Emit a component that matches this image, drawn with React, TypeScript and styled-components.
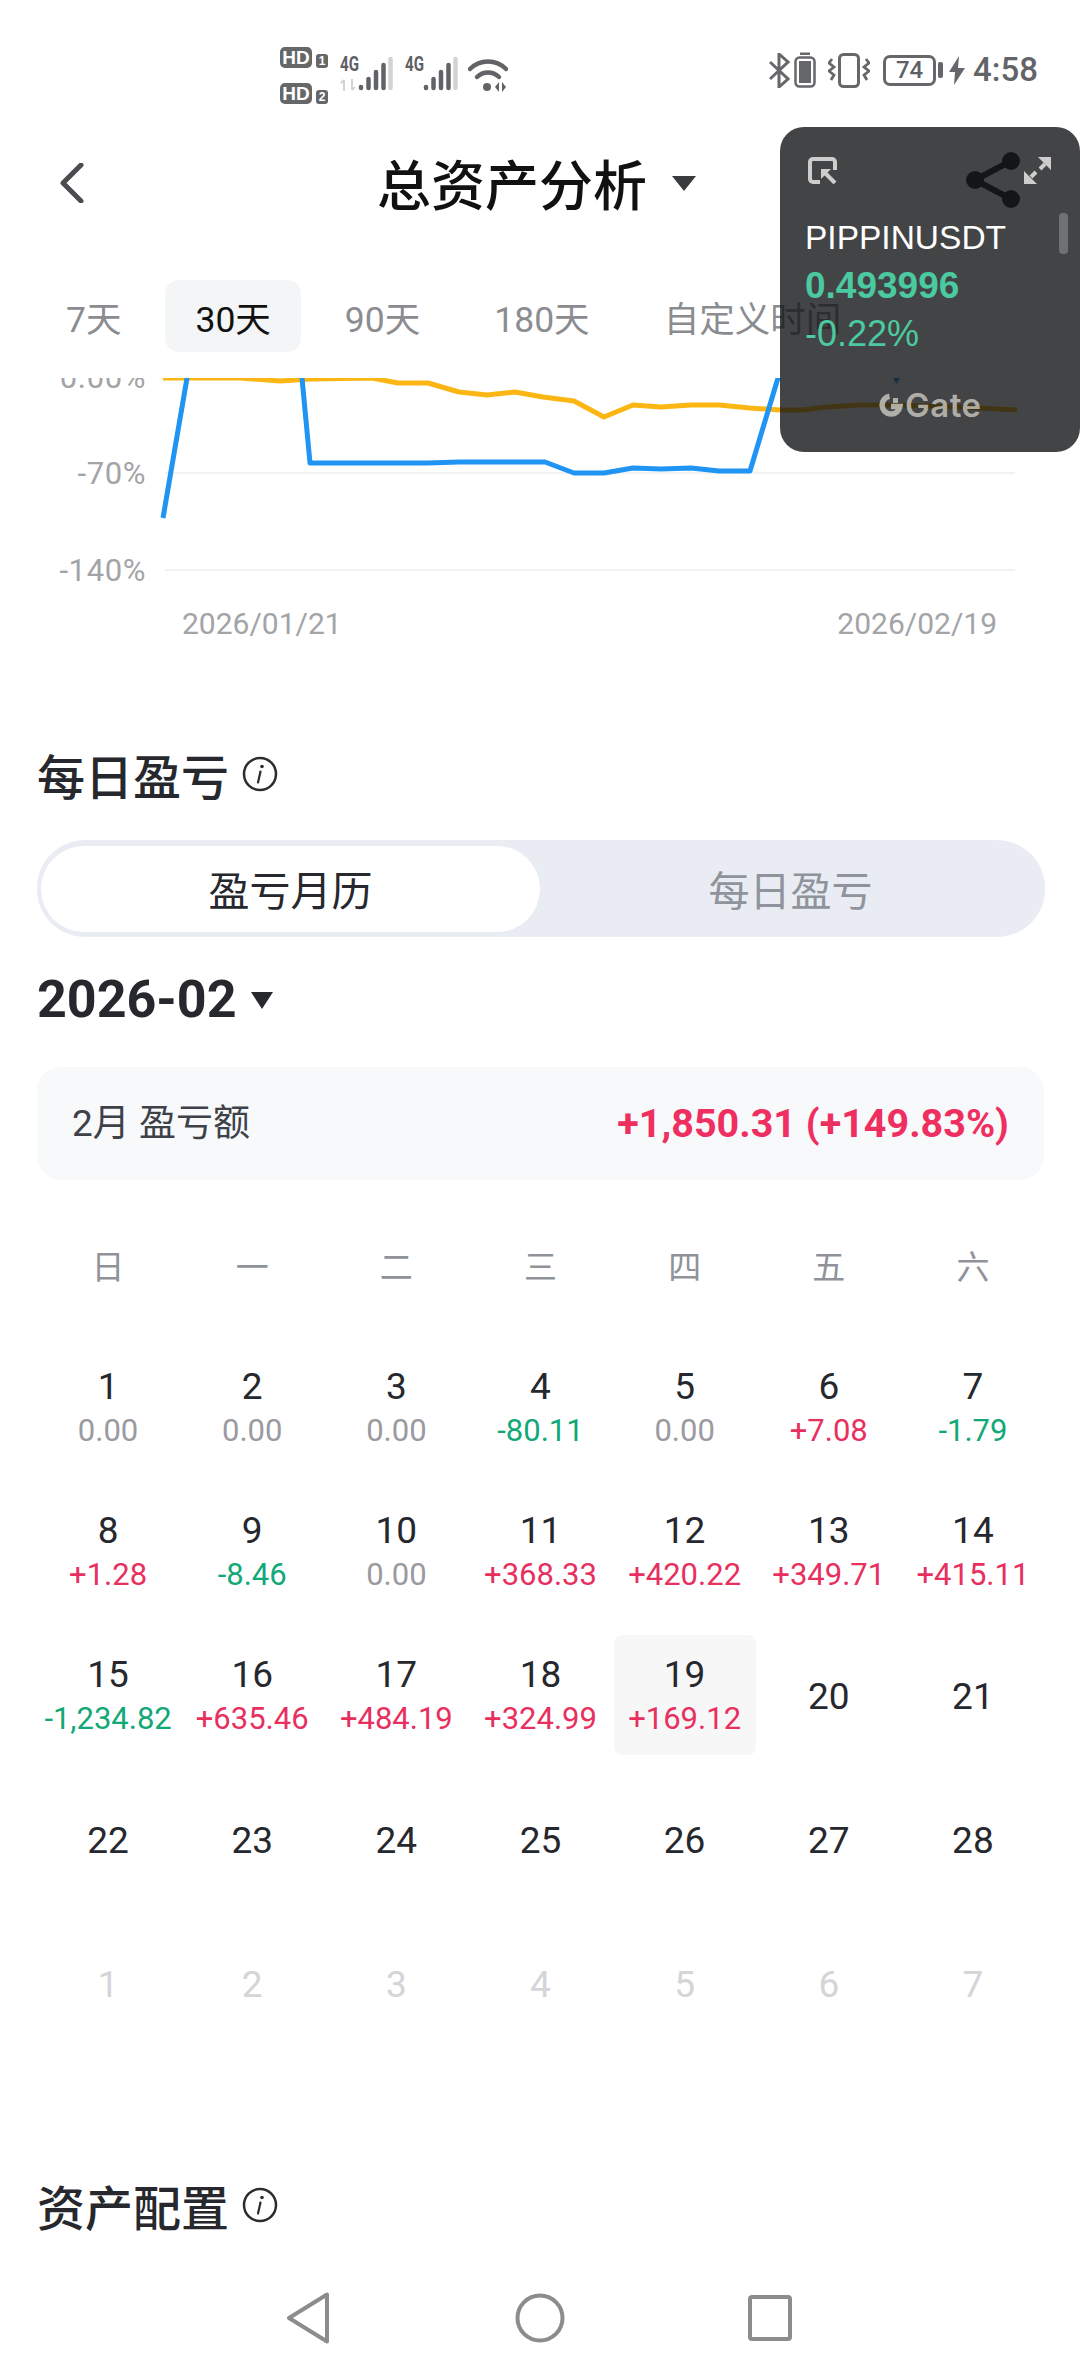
import React from "react"
import styled, { createGlobalStyle } from "styled-components"

const GlobalStyle = createGlobalStyle`
    html, body {
        margin: 0;
        padding: 0;
        background: #fff;
    }
    * {
        box-sizing: border-box;
    }
    body {
        font-family: Roboto, "Noto Sans CJK SC", sans-serif;
    }
`

const Page = styled.div`
    position: relative;
    width: 1080px;
    height: 2376px;
    overflow: hidden;
    background: #fff;
    display: flex;
    flex-direction: column;
`

/* status bar */
const StatusBar = styled.div`
    height: 120px;
    display: flex;
    padding: 47px 42px 0 280px;
    color: #5f6063;
`
const HdStack = styled.div`
    display: flex;
    flex-direction: column;
    gap: 15px;
`
const HdRow = styled.div`
    display: flex;
    align-items: flex-end;
    gap: 4px;
    height: 21px;
`
const HdBadge = styled.span`
    width: 32px;
    height: 21px;
    border-radius: 5px;
    background: #666769;
    color: #fff;
    font: 700 19px/21px "Liberation Sans", sans-serif;
    text-align: center;
`
const HdIndex = styled.span`
    width: 12px;
    height: 14px;
    border-radius: 3px;
    background: #666769;
    color: #fff;
    font: 700 12px/14px "Liberation Sans", sans-serif;
    text-align: center;
`
const Signal = styled.div<{ $gap: number }>`
    display: flex;
    align-items: flex-start;
    margin-left: ${p => p.$gap}px;
    margin-top: 9px;
`
const SignalLabel = styled.div`
    width: 18px;
    display: flex;
    flex-direction: column;
    gap: 6px;
    font: 700 21px/17px Roboto, sans-serif;
`
const SignalText = styled.span`
    display: block;
    transform: scaleX(0.72);
    transform-origin: left center;
    white-space: nowrap;
`
const Wifi = styled.svg`
    margin: 10px 0 0 9px;
`
const StatusRight = styled.div`
    margin-left: auto;
    display: flex;
    align-items: center;
    height: 46px;
`
const BatteryBox = styled.div`
    width: 53px;
    height: 31px;
    margin-left: 13px;
    border: 3px solid #66676a;
    border-radius: 7px;
    font: 500 24px/25px Roboto, sans-serif;
    text-align: center;
    color: #5f6063;
`
const BatteryNub = styled.div`
    width: 5px;
    height: 16px;
    margin-left: 2px;
    border-radius: 2px;
    background: #66676a;
`
const Clock = styled.span`
    margin-left: 8px;
    font: 500 33px/46px Roboto, sans-serif;
    color: #636467;
`

/* header */
const Header = styled.header`
    height: 126px;
    display: grid;
    grid-template-columns: 1fr auto 1fr;
    align-items: center;
    padding: 0 55px 0 60px;
`
const TitleGroup = styled.div`
    display: flex;
    align-items: center;
    gap: 25px;
    margin-left: -12px;
`
const Title = styled.h1`
    margin: 0;
    font: 500 54px/64px "Noto Sans CJK SC", sans-serif;
    color: #111;
`
const ShareButton = styled.svg`
    justify-self: end;
    margin-top: -6px;
`

/* period tabs */
const Tabs = styled.div`
    height: 72px;
    margin-top: 34px;
    padding-left: 36px;
    display: flex;
    gap: 14px;
`
const Tab = styled.div<{ $active?: boolean }>`
    height: 72px;
    padding: 0 30px;
    border-radius: 14px;
    font-size: 35.5px;
    line-height: 80px;
    white-space: nowrap;
    color: ${p => (p.$active ? "#111" : "#8a8c90")};
    background: ${p => (p.$active ? "#f3f5f6" : "transparent")};
`

const ChartWrap = styled.div`
    margin-top: 26px;
    height: 272px;
`
const AxisText = styled.text<{ $wide?: boolean }>`
    font: 400 ${p => (p.$wide ? 31 : 30)}px Roboto, sans-serif;
    letter-spacing: ${p => (p.$wide ? 0.6 : 0)}px;
    fill: #a2a4a8;
`

/* daily pnl */
const SectionTitle = styled.div<{ $top: number }>`
    margin: ${p => p.$top}px 0 0 37px;
    height: 56px;
    display: flex;
    align-items: center;
    gap: 13px;
    font: 500 48px/56px "Noto Sans CJK SC", sans-serif;
    color: #26282d;
`
const Segment = styled.div`
    margin: 38px 35px 0 37px;
    height: 97px;
    padding: 6px 4px 5px;
    border-radius: 48px;
    background: #e9ecf2;
    display: grid;
    grid-template-columns: 499px 1fr;
`
const SegmentItem = styled.div<{ $active?: boolean }>`
    border-radius: 43px;
    text-align: center;
    font: 400 41px/84px "Noto Sans CJK SC", sans-serif;
    color: ${p => (p.$active ? "#26282d" : "#8f949c")};
    background: ${p => (p.$active ? "#fff" : "transparent")};
`
const MonthRow = styled.div`
    margin: 33px 0 0 37px;
    height: 60px;
    display: flex;
    align-items: center;
    gap: 14px;
`
const MonthText = styled.span`
    font: 700 52px/60px Roboto, sans-serif;
    color: #26282d;
`
const Caret = styled.span<{ $w: number; $h: number; $color: string }>`
    width: 0;
    height: 0;
    border-left: ${p => p.$w / 2}px solid transparent;
    border-right: ${p => p.$w / 2}px solid transparent;
    border-top: ${p => p.$h}px solid ${p => p.$color};
`
const Summary = styled.div`
    margin: 37px 36px 0 37px;
    height: 113px;
    padding: 0 35px;
    border-radius: 24px;
    background: #f7f9fb;
    display: flex;
    align-items: center;
    justify-content: space-between;
`
const SummaryLabel = styled.span`
    font-size: 37px;
    line-height: 44px;
    color: #3e4148;
`
const SummaryValue = styled.span`
    font-size: 39.500px;
    font-weight: 700;
    color: #ee2f5f;
`

/* calendar */
const Calendar = styled.div`
    margin: 65px 0 0 36px;
    width: 1009px;
`
const WeekRow = styled.div`
    height: 40px;
    display: grid;
    grid-template-columns: repeat(7, 1fr);
`
const WeekDay = styled.div`
    text-align: center;
    font: 400 33px/40px "Noto Sans CJK SC", sans-serif;
    color: #8f9399;
`
const DayGrid = styled.div`
    margin-top: 62px;
    display: grid;
    grid-template-columns: repeat(7, 1fr);
    grid-auto-rows: 120px;
    row-gap: 24px;
`
const DayCell = styled.div<{ $today?: boolean }>`
    margin: 0 1px;
    padding-top: 3px;
    border-radius: 8px;
    display: flex;
    flex-direction: column;
    align-items: center;
    justify-content: center;
    background: ${p => (p.$today ? "#f7f7f7" : "transparent")};
`
const DayNumber = styled.div<{ $muted?: boolean }>`
    font-size: 37px;
    line-height: 44px;
    color: ${p => (p.$muted ? "#d3d5d8" : "#26282d")};
`
const toneColors = { up: "#e8305f", down: "#12a877", flat: "#9a9a9f" }
type Tone = keyof typeof toneColors
const DayValue = styled.div<{ $tone: Tone }>`
    font-size: 31px;
    line-height: 44px;
    white-space: nowrap;
    color: ${p => toneColors[p.$tone]};
`

/* nav */
const NavBar = styled.nav`
    flex: 1;
    display: flex;
    align-items: flex-start;
    padding: 59px 0 0 286px;
`
const NavIcon = styled.svg<{ $gap?: number }>`
    margin-left: ${p => p.$gap ?? 0}px;
`

/* floating window */
const Floating = styled.aside`
    position: absolute;
    left: 780px;
    top: 127px;
    width: 300px;
    height: 325px;
    padding: 30px 0 0 25px;
    border-radius: 24px;
    background: rgba(20, 21, 23, 0.8);
    font-family: "Liberation Sans", sans-serif;
`
const FloatingIcons = styled.div`
    height: 27px;
    display: flex;
    justify-content: space-between;
    padding: 0 28px 0 3px;
`
const FloatingLine = styled.div<{ $bold?: boolean; $size: number; $color: string }>`
    height: 48px;
    line-height: 48px;
    font-size: ${p => p.$size}px;
    font-weight: ${p => (p.$bold ? 700 : 400)};
    color: ${p => p.$color};
    white-space: nowrap;
`
const FloatingText = styled.div`
    margin-top: 30px;
`
const ScrollThumb = styled.div`
    position: absolute;
    right: 12px;
    top: 86px;
    width: 9px;
    height: 41px;
    border-radius: 4px;
    background: #707174;
`
const GateLogo = styled.div`
    margin: 35px 0 0 74px;
    display: flex;
    align-items: center;
    gap: 2px;
    height: 24px;
    color: rgba(205, 203, 195, 0.8);
`
const GateText = styled.span`
    font: 600 33px/24px Inter, sans-serif;
    letter-spacing: 0.5px;
`

const blueLine = "163,518 187,378 187,360 302,360 302,378 310,463 428,463 459,462 545,462 574,473 604,473 633,468 661,469 691,468 719,471 750,471 778,378 781,360"
const orangeLine = "163,378 240,378 280,381 311,379 372,378 398,383 428,383 459,392 487,395 515,392 543,397 574,401 604,417 633,405 661,407 691,405 719,405 750,408 780,410 803,410 827,407 860,405 893,405 927,406 960,407 1017,410"

const weekDays = ["日", "一", "二", "三", "四", "五", "六"]

const days: { n: number; v?: string; tone?: Tone; today?: boolean; muted?: boolean }[] = [
    { n: 1, v: "0.00", tone: "flat" },
    { n: 2, v: "0.00", tone: "flat" },
    { n: 3, v: "0.00", tone: "flat" },
    { n: 4, v: "-80.11", tone: "down" },
    { n: 5, v: "0.00", tone: "flat" },
    { n: 6, v: "+7.08", tone: "up" },
    { n: 7, v: "-1.79", tone: "down" },
    { n: 8, v: "+1.28", tone: "up" },
    { n: 9, v: "-8.46", tone: "down" },
    { n: 10, v: "0.00", tone: "flat" },
    { n: 11, v: "+368.33", tone: "up" },
    { n: 12, v: "+420.22", tone: "up" },
    { n: 13, v: "+349.71", tone: "up" },
    { n: 14, v: "+415.11", tone: "up" },
    { n: 15, v: "-1,234.82", tone: "down" },
    { n: 16, v: "+635.46", tone: "up" },
    { n: 17, v: "+484.19", tone: "up" },
    { n: 18, v: "+324.99", tone: "up" },
    { n: 19, v: "+169.12", tone: "up", today: true },
    { n: 20 }, { n: 21 }, { n: 22 }, { n: 23 }, { n: 24 }, { n: 25 }, { n: 26 }, { n: 27 }, { n: 28 },
    { n: 1, muted: true }, { n: 2, muted: true }, { n: 3, muted: true }, { n: 4, muted: true },
    { n: 5, muted: true }, { n: 6, muted: true }, { n: 7, muted: true },
]

function Bars() {
    return (
        <svg width="36" height="36" viewBox="0 0 36 36">
            <g fill="none" strokeWidth="4.5" strokeLinecap="round" stroke="#626366">
                <path d="M3 31v1" />
                <path d="M10.500 23v9" />
                <path d="M18 16v16" />
                <path d="M25.500 9v23" />
                <path d="M32.500 3v29" stroke="#d2d3d4" />
            </g>
        </svg>
    )
}

function InfoIcon() {
    return (
        <svg width="36" height="36" viewBox="0 0 36 36">
            <circle cx="18" cy="18" r="16" fill="none" stroke="#2a2c30" strokeWidth="2.500" />
            <circle cx="20" cy="10.500" r="1.800" fill="#2a2c30" />
            <path d="M18.500 15.500 16 26.500" stroke="#2a2c30" strokeWidth="2.200" strokeLinecap="round" fill="none" />
        </svg>
    )
}

export default function App() {
    return (
        <Page>
            <GlobalStyle />

            <StatusBar>
                <HdStack>
                    <HdRow><HdBadge>HD</HdBadge><HdIndex>1</HdIndex></HdRow>
                    <HdRow><HdBadge>HD</HdBadge><HdIndex>2</HdIndex></HdRow>
                </HdStack>
                <Signal $gap={12}>
                    <SignalLabel>
                        <SignalText>4G</SignalText>
                        <svg width="17" height="12" viewBox="0 0 17 12">
                            <path d="M4 12V1M1 4l3-3M12 0v11M15 8l-3 3" stroke="#d2d3d4" strokeWidth="2" fill="none" />
                        </svg>
                    </SignalLabel>
                    <Bars />
                </Signal>
                <Signal $gap={11}>
                    <SignalLabel>
                        <SignalText>4G</SignalText>
                    </SignalLabel>
                    <Bars />
                </Signal>
                <Wifi width="40" height="36" viewBox="0 0 40 36">
                    <path d="M2 12C12 2 28 2 38 12" fill="none" stroke="#626366" strokeWidth="4.500" strokeLinecap="round" />
                    <path d="M9 20c6-6 16-6 22 0" fill="none" stroke="#626366" strokeWidth="4.500" strokeLinecap="round" />
                    <circle cx="19" cy="30" r="4" fill="#626366" />
                    <path d="M27 30l4-5v10zM34 25v10l4-5z" fill="#626366" />
                </Wifi>
                <StatusRight>
                    <svg width="21" height="35" viewBox="0 0 21 35">
                        <path d="M1 9l18 17-9 8V1l9 8L1 26" fill="none" stroke="#66676a" strokeWidth="3" />
                    </svg>
                    <svg width="22" height="36" viewBox="0 0 22 36" style={{ marginLeft: 4 }}>
                        <rect x="6" y="0.500" width="10" height="2.500" fill="#66676a" />
                        <rect x="1.500" y="5.500" width="19" height="29" rx="4" fill="none" stroke="#66676a" strokeWidth="2.500" />
                        <rect x="5" y="9" width="12" height="22" fill="#66676a" />
                    </svg>
                    <svg width="42" height="35" viewBox="0 0 42 35" style={{ marginLeft: 12 }}>
                        <rect x="11.500" y="1.500" width="19" height="32" rx="4" fill="none" stroke="#66676a" strokeWidth="3" />
                        <path d="M4 6l-3 4 5 4-5 4 5 4-3 5M38 6l3 4-5 4 5 4-5 4 3 5" fill="none" stroke="#66676a" strokeWidth="2.800" />
                    </svg>
                    <BatteryBox>74</BatteryBox>
                    <BatteryNub />
                    <svg width="16" height="29" viewBox="0 0 16 29" style={{ marginLeft: 6 }}>
                        <path d="M10 0 0 16h6l-1 13L16 12H9z" fill="#66676a" />
                    </svg>
                    <Clock>4:58</Clock>
                </StatusRight>
            </StatusBar>

            <Header>
                <svg width="24" height="40" viewBox="0 0 24 40">
                    <path d="M21 2 3 20l18 18" fill="none" stroke="#4a4c50" strokeWidth="5" strokeLinejoin="round" strokeLinecap="round" />
                </svg>
                <TitleGroup>
                    <Title>总资产分析</Title>
                    <Caret $w={24} $h={15} $color="#3a3b3e" />
                </TitleGroup>
                <ShareButton width="60" height="60" viewBox="0 0 60 60">
                    <g fill="#17181a" stroke="#17181a" strokeWidth="6">
                        <path d="M10 30 46 11M10 30l36 19" fill="none" />
                        <circle cx="10" cy="30" r="6" />
                        <circle cx="46" cy="11" r="6" />
                        <circle cx="46" cy="49" r="6" />
                    </g>
                </ShareButton>
            </Header>

            <Tabs>
                <Tab>7天</Tab>
                <Tab $active>30天</Tab>
                <Tab>90天</Tab>
                <Tab>180天</Tab>
                <Tab>自定义时间</Tab>
            </Tabs>

            <ChartWrap>
                <svg width="1080" height="272" viewBox="0 378 1080 272">
                    <path d="M165 473H1015M165 570H1015" stroke="#f1f2f4" strokeWidth="2" />
                    <AxisText $wide x="146" y="388" textAnchor="end">0.00%</AxisText>
                    <AxisText $wide x="146" y="484" textAnchor="end">-70%</AxisText>
                    <AxisText $wide x="146" y="581" textAnchor="end">-140%</AxisText>
                    <AxisText x="182" y="634">2026/01/21</AxisText>
                    <AxisText x="997" y="634" textAnchor="end">2026/02/19</AxisText>
                    <polyline points={orangeLine} fill="none" stroke="#fbb614" strokeWidth="5" strokeLinejoin="round" />
                    <polyline points={blueLine} fill="none" stroke="#2094f3" strokeWidth="5" strokeLinejoin="round" />
                    <path d="M893 378h7l-3.500 6z" fill="#2094f3" />
                </svg>
            </ChartWrap>

            <SectionTitle $top={96}>
                每日盈亏
                <InfoIcon />
            </SectionTitle>

            <Segment>
                <SegmentItem $active>盈亏月历</SegmentItem>
                <SegmentItem>每日盈亏</SegmentItem>
            </Segment>

            <MonthRow>
                <MonthText>2026-02</MonthText>
                <Caret $w={22} $h={17} $color="#26282d" />
            </MonthRow>

            <Summary>
                <SummaryLabel>2月 盈亏额</SummaryLabel>
                <SummaryValue>+1,850.31 (+149.83%)</SummaryValue>
            </Summary>

            <Calendar>
                <WeekRow>
                    {weekDays.map(d => <WeekDay key={d}>{d}</WeekDay>)}
                </WeekRow>
                <DayGrid>
                    {days.map((d, i) => (
                        <DayCell key={i} $today={d.today}>
                            <DayNumber $muted={d.muted}>{d.n}</DayNumber>
                            {d.v && d.tone && <DayValue $tone={d.tone}>{d.v}</DayValue>}
                        </DayCell>
                    ))}
                </DayGrid>
            </Calendar>

            <SectionTitle $top={134}>
                资产配置
                <InfoIcon />
            </SectionTitle>

            <NavBar>
                <NavIcon width="44" height="52" viewBox="0 0 44 52">
                    <path d="M41 2.500V49.500L3 26z" fill="none" stroke="#8c8c8c" strokeWidth="4" strokeLinejoin="round" />
                </NavIcon>
                <NavIcon $gap={185} width="50" height="52" viewBox="0 0 50 52">
                    <circle cx="25" cy="26" r="22.500" fill="none" stroke="#8c8c8c" strokeWidth="4" />
                </NavIcon>
                <NavIcon $gap={183} width="44" height="52" viewBox="0 0 44 52">
                    <rect x="2" y="5" width="40" height="42" rx="2" fill="none" stroke="#8c8c8c" strokeWidth="4" />
                </NavIcon>
            </NavBar>

            <Floating>
                <FloatingIcons>
                    <svg width="29" height="27" viewBox="0 0 29 27">
                        <path d="M12 25H5a3 3 0 0 1-3-3V5a3 3 0 0 1 3-3h19a3 3 0 0 1 3 3v8" fill="none" stroke="#cdcdcd" strokeWidth="4" />
                        <path d="M13 12h10L13 22z" fill="#cdcdcd" />
                        <path d="M16 15l11 11" stroke="#cdcdcd" strokeWidth="4" />
                    </svg>
                    <svg width="28" height="28" viewBox="0 0 28 28">
                        <path d="M14 0h13v13zM13 27H0V14z" fill="#cdcdcd" />
                        <path d="M21 7l-5 5M7 20l5-5" stroke="#cdcdcd" strokeWidth="4" />
                    </svg>
                </FloatingIcons>
                <FloatingText>
                    <FloatingLine $size={33.500} $color="#fff">PIPPINUSDT</FloatingLine>
                    <FloatingLine $size={37} $bold $color="#4bc9a0">0.493996</FloatingLine>
                    <FloatingLine $size={36} $color="#4bc9a0">-0.22%</FloatingLine>
                </FloatingText>
                <ScrollThumb />
                <GateLogo>
                    <svg width="24" height="24" viewBox="0 0 24 24">
                        <path d="M10.500 3.200A9 9 0 1 0 21 13.500H12" fill="none" stroke="currentColor" strokeWidth="5.500" />
                        <rect x="14" y="5" width="5" height="5" fill="currentColor" />
                    </svg>
                    <GateText>Gate</GateText>
                </GateLogo>
            </Floating>
        </Page>
    )
}
